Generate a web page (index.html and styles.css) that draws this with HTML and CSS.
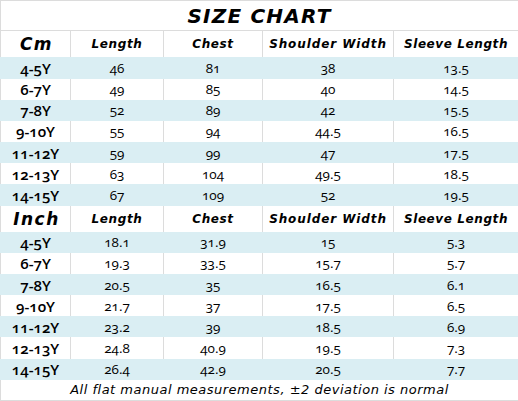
FILE: index.html
```html
<!DOCTYPE html>
<html lang="en">
<head>
    <meta charset="UTF-8">
    <meta name="viewport" content="width=device-width, initial-scale=1.0">
    <title>Size Chart</title>
    <link rel="stylesheet" href="styles.css">
</head>
<body>
    <table class="chart">
        <colgroup>
            <col class="c-size">
            <col class="c-length">
            <col class="c-chest">
            <col class="c-shoulder">
            <col class="c-sleeve">
        </colgroup>
        <tr class="title-row">
            <td colspan="5">SIZE CHART</td>
        </tr>

        <!-- cm -->
        <tr class="head">
            <td class="unit">Cm</td>
            <td>Length</td>
            <td>Chest</td>
            <td class="wide">Shoulder Width</td>
            <td>Sleeve Length</td>
        </tr>
        <tr class="row blue"><td class="age">4-5Y</td><td>46</td><td>81</td><td>38</td><td>13.5</td></tr>
        <tr class="row"><td class="age">6-7Y</td><td>49</td><td>85</td><td>40</td><td>14.5</td></tr>
        <tr class="row blue"><td class="age">7-8Y</td><td>52</td><td>89</td><td>42</td><td>15.5</td></tr>
        <tr class="row"><td class="age">9-10Y</td><td>55</td><td>94</td><td>44.5</td><td>16.5</td></tr>
        <tr class="row blue"><td class="age">11-12Y</td><td>59</td><td>99</td><td>47</td><td>17.5</td></tr>
        <tr class="row"><td class="age">12-13Y</td><td>63</td><td>104</td><td>49.5</td><td>18.5</td></tr>
        <tr class="row blue"><td class="age">14-15Y</td><td>67</td><td>109</td><td>52</td><td>19.5</td></tr>

        <!-- inch -->
        <tr class="head">
            <td class="unit">Inch</td>
            <td>Length</td>
            <td>Chest</td>
            <td class="wide">Shoulder Width</td>
            <td>Sleeve Length</td>
        </tr>
        <tr class="row blue"><td class="age">4-5Y</td><td>18.1</td><td>31.9</td><td>15</td><td>5.3</td></tr>
        <tr class="row"><td class="age">6-7Y</td><td>19.3</td><td>33.5</td><td>15.7</td><td>5.7</td></tr>
        <tr class="row blue"><td class="age">7-8Y</td><td>20.5</td><td>35</td><td>16.5</td><td>6.1</td></tr>
        <tr class="row"><td class="age">9-10Y</td><td>21.7</td><td>37</td><td>17.5</td><td>6.5</td></tr>
        <tr class="row blue"><td class="age">11-12Y</td><td>23.2</td><td>39</td><td>18.5</td><td>6.9</td></tr>
        <tr class="row"><td class="age">12-13Y</td><td>24.8</td><td>40.9</td><td>19.5</td><td>7.3</td></tr>
        <tr class="row blue"><td class="age">14-15Y</td><td>26.4</td><td>42.9</td><td>20.5</td><td>7.7</td></tr>

        <tr class="note-row">
            <td colspan="5">All flat manual measurements, ±2 deviation is normal</td>
        </tr>
    </table>
</body>
</html>
```

FILE: styles.css
```css
body {
    margin: 0;
    padding: 0;
    background-color: #fff;
    font-family: "Open Sans", "Liberation Sans", sans-serif;
    color: #000;
}

.chart {
    width: 518px;
    height: 401px;
    border-collapse: collapse;
    table-layout: fixed;
    border: 1px solid #dcdcdc;
}

.c-size { width: 70px; }
.c-length { width: 93px; }
.c-chest { width: 99px; }
.c-shoulder { width: 131px; }
.c-sleeve { width: 125px; }

.chart td {
    padding: 0;
    text-align: center;
    vertical-align: middle;
    border-left: 1px solid #dcdcdc;
}

/* 标题 */
.title-row td {
    height: 29px;
    border-bottom: 1px solid #dcdcdc;
    font-family: "DejaVu Sans", sans-serif;
    font-weight: bold;
    font-style: italic;
    font-size: 20px;
    letter-spacing: 1.2px;
}

.head td {
    height: 26px;
    font-family: "DejaVu Sans", sans-serif;
    font-weight: bold;
    font-style: italic;
    font-size: 12px;
    letter-spacing: 0.6px;
}

.head td.wide {
    letter-spacing: 0.9px;
}

.head td.unit {
    font-size: 17px;
    letter-spacing: 1.5px;
    padding-left: 2px;
}

.row td {
    height: 21px;
    font-size: 13.5px;
    line-height: 16px;
    font-variant-numeric: oldstyle-nums;
}

.row td.age {
    font-size: 15px;
    font-weight: 600;
}

.blue td {
    background-color: #daeef3;
    border-left-color: #daeef3;
}

.note-row td {
    height: 20px;
    font-family: "DejaVu Sans", sans-serif;
    font-style: italic;
    font-size: 13px;
    letter-spacing: 0.5px;
}
```
